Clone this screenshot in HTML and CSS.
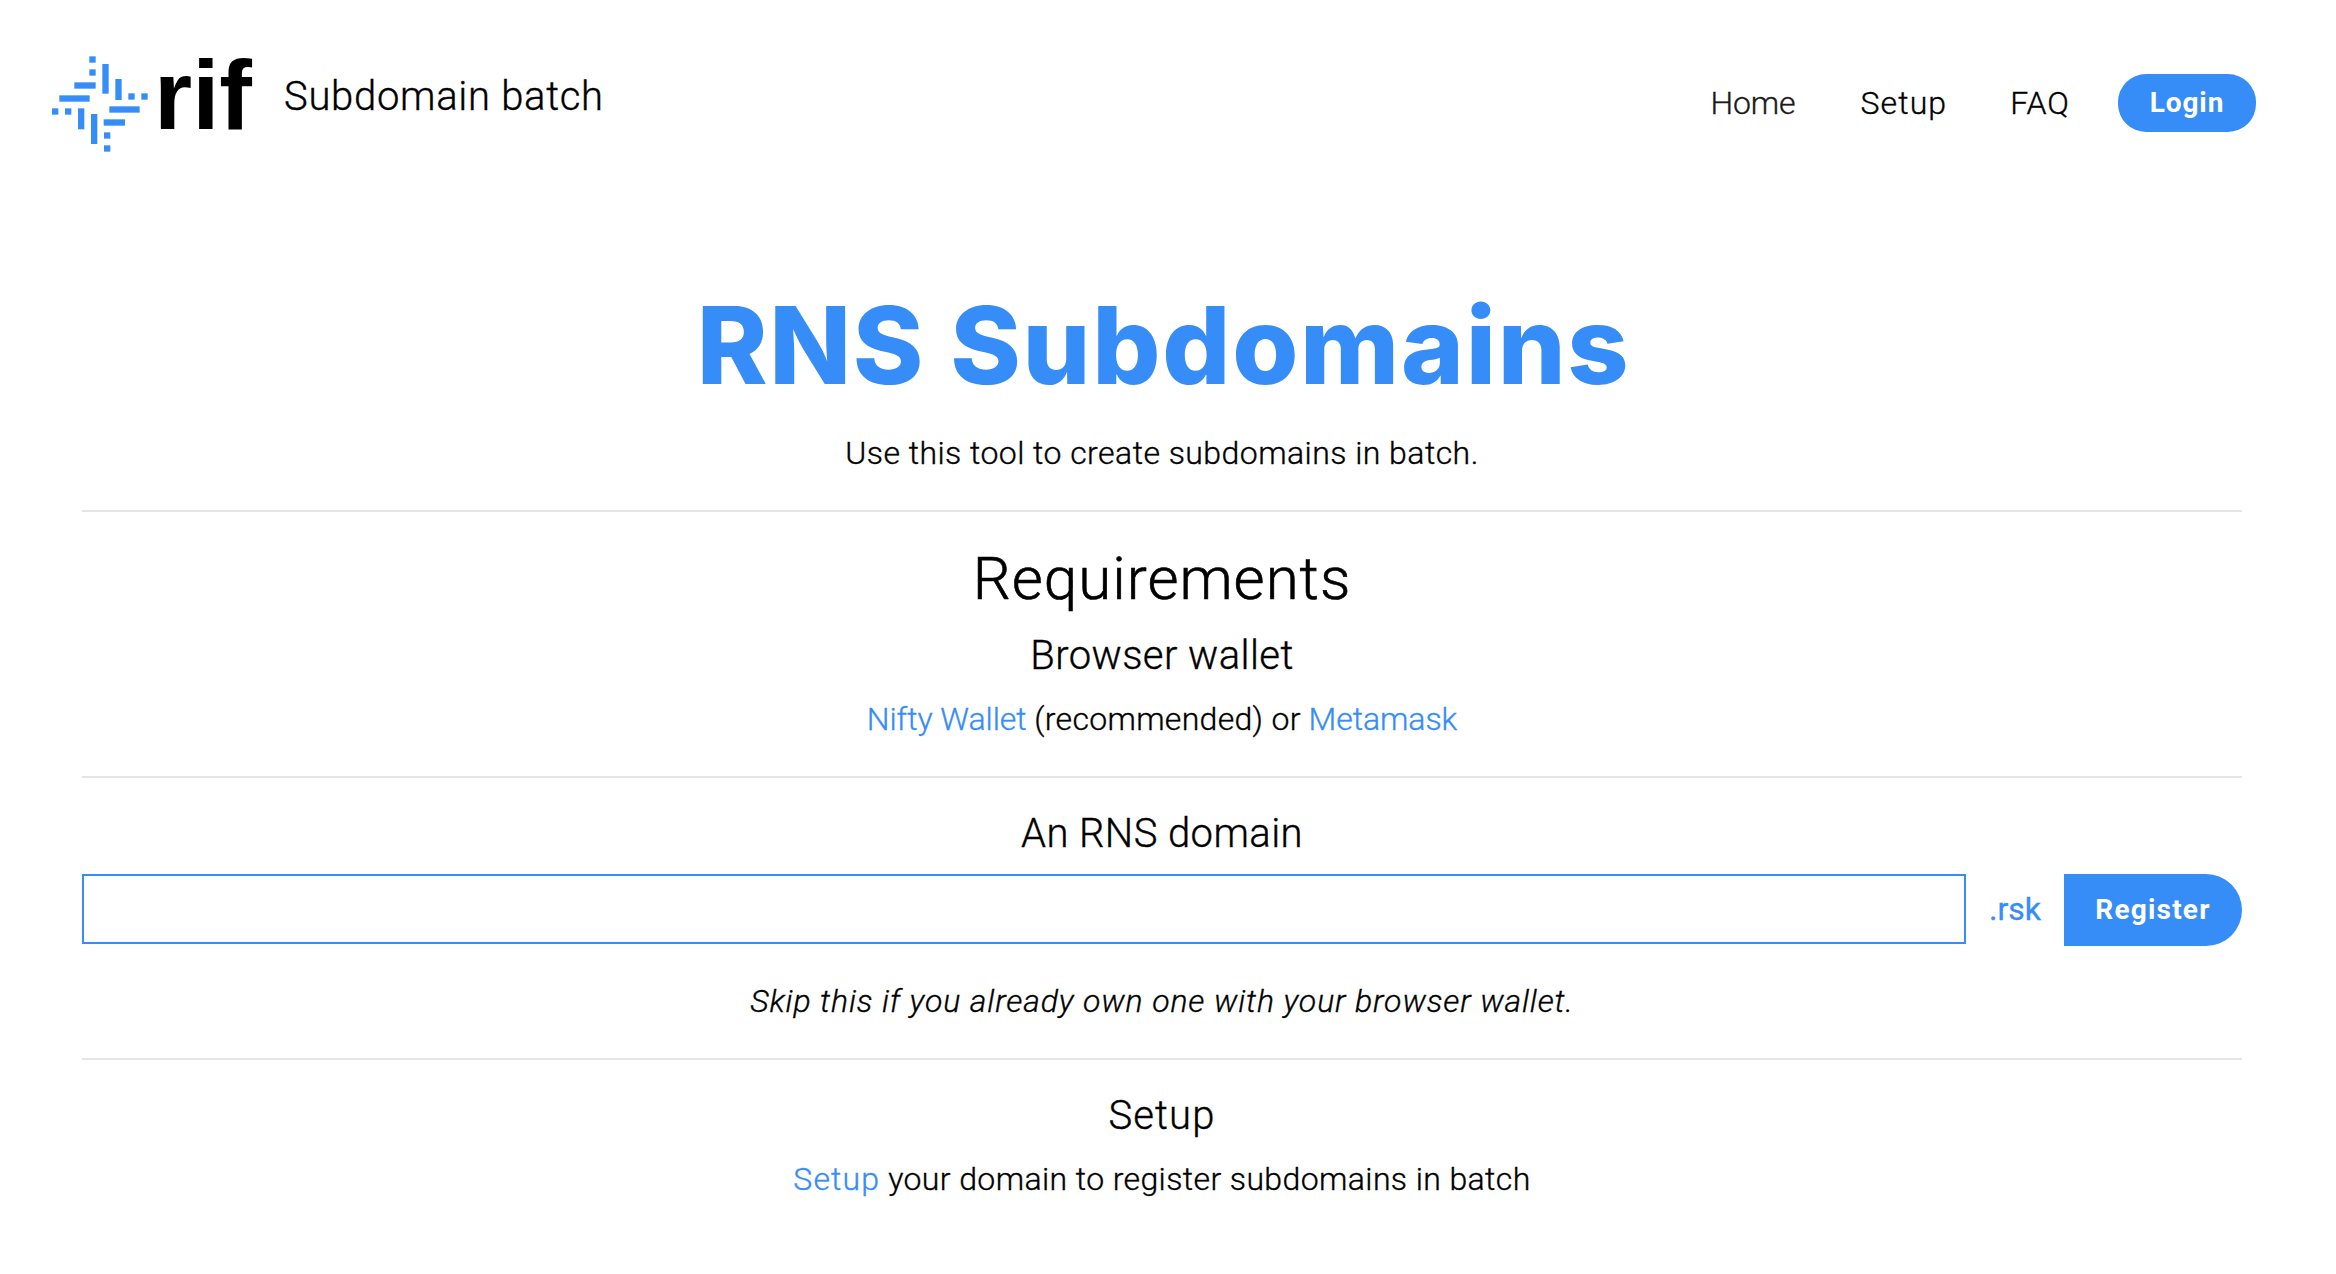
FILE: index.html
```
<!DOCTYPE html>
<html lang="en">
<head>
<meta charset="utf-8">
<title>RNS Subdomains</title>
<link rel="stylesheet" href="styles.css">
</head>
<body>
<header class="header">
  <a class="brand" href="#">
    <svg class="logo" width="204" height="96" viewBox="0 0 204 96" role="img" aria-label="rif">
      <g fill="#368df7" transform="scale(.33333) translate(-36 -48)">
        <rect x="148" y="49" width="19" height="19"/>
        <rect x="148" y="88" width="19" height="19"/>
        <rect x="265" y="160" width="19" height="19"/>
        <rect x="304" y="160" width="19" height="19"/>
        <rect x="36" y="205" width="19" height="19"/>
        <rect x="75" y="205" width="19" height="19"/>
        <rect x="192" y="277" width="19" height="19"/>
        <rect x="192" y="316" width="19" height="19"/>
        <rect x="187" y="72" width="19" height="89"/>
        <rect x="226" y="117" width="19" height="63"/>
        <rect x="103" y="127" width="64" height="19"/>
        <rect x="58" y="166" width="91" height="19"/>
        <rect x="114" y="205" width="19" height="63"/>
        <rect x="153" y="222" width="19" height="90"/>
        <rect x="208" y="199" width="91" height="19"/>
        <rect x="191" y="238" width="64" height="19"/>
      </g>
      <text class="wordmark" x="102" y="73">rif</text>
    </svg>
    <span class="brand-name">Subdomain batch</span>
  </a>
  <nav class="nav">
    <a class="nav-link nav-home" href="#">Home</a>
    <a class="nav-link nav-setup" href="#">Setup</a>
    <a class="nav-link nav-faq" href="#">FAQ</a>
    <button class="login">Login</button>
  </nav>
</header>
<main class="content">
  <h1 class="title">RNS Subdomains</h1>
  <p class="text intro">Use this tool to create subdomains in batch.</p>
  <hr class="rule">
  <section>
    <h2 class="heading">Requirements</h2>
    <h3 class="subheading wallet-heading">Browser wallet</h3>
    <p class="text wallets"><a class="link" href="#">Nifty Wallet</a> <span class="wallets-note">(recommended) or</span> <a class="link" href="#">Metamask</a></p>
  </section>
  <hr class="rule">
  <section>
    <h3 class="subheading">An RNS domain</h3>
    <form class="domain-form">
      <input class="domain-input" type="text" aria-label="Domain">
      <span class="suffix">.rsk</span>
      <button class="register" type="button">Register</button>
    </form>
    <p class="text note">Skip this if you already own one with your browser wallet.</p>
  </section>
  <hr class="rule">
  <section>
    <h3 class="subheading setup-heading">Setup</h3>
    <p class="text setup-text"><a class="link setup-link" href="#">Setup</a> your domain to register subdomains in batch</p>
  </section>
</main>
</body>
</html>
```
FILE: styles.css
```
* { box-sizing: border-box; }

body {
  margin: 0;
  background: #fff;
  color: #000;
  font: 300 32px/48px Roboto, "Open Sans", sans-serif;
  -webkit-text-stroke: .35px;
}

h1, h2, h3, p { margin: 0; }
a { color: inherit; text-decoration: none; }

.header {
  display: flex;
  justify-content: space-between;
  height: 281px;
  padding: 56px 80px 0 52px;
}

.brand {
  display: flex;
  align-items: flex-start;
}

.logo { overflow: visible; -webkit-text-stroke: 0; }
.wordmark { font: bold 98px "Liberation Sans", Arial, sans-serif; }

.brand-name {
  margin: 17px 0 0 28px;
  font-size: 40px;
  letter-spacing: .7px;
}

.nav {
  display: flex;
  height: 58px;
  margin-top: 18px;
  align-items: center;
}

.nav-home { margin-right: 65px; color: #1a1a1a; letter-spacing: -.1px; }
.nav-setup { margin-right: 63px; letter-spacing: 1.1px; }
.nav-faq { margin-right: 48px; letter-spacing: 1px; }

.login, .register {
  border: 0;
  padding: 0;
  background: #368df7;
  color: #fff;
  font: 700 28px/40px Roboto, sans-serif;
  -webkit-text-stroke: 0;
}

.login {
  width: 138px;
  height: 58px;
  border-radius: 28px;
  letter-spacing: .9px;
}

.content {
  padding: 0 94px 0 82px;
  text-align: center;
}

.title {
  padding-left: 3px;
  color: #368df7;
  font: 800 107px/128px Inter, sans-serif;
  letter-spacing: 1.7px;
  -webkit-text-stroke: 0;
}

.intro { margin-top: 20px; letter-spacing: .45px; }

.rule {
  height: 2px;
  margin: 33px 0 32px;
  border: 0;
  background: #e5e5e5;
}

.heading {
  font-size: 60px;
  font-weight: 300;
  line-height: 70px;
  letter-spacing: 1px;
  -webkit-text-stroke: .6px;
}

.subheading {
  font-size: 40px;
  font-weight: 300;
  letter-spacing: .42px;
}

.wallet-heading { margin-top: 18px; }
.setup-heading { letter-spacing: 1.15px; }
.link { color: #368df7; }
.wallets { margin-top: 15px; letter-spacing: -.05px; }
.wallets-note { letter-spacing: .3px; }

.domain-form {
  display: flex;
  align-items: flex-start;
  margin-top: 16px;
}

.domain-input {
  flex: 1;
  min-width: 0;
  height: 70px;
  border: 2px solid #368df7;
  border-radius: 0;
  background: #fff;
  font: inherit;
}

.suffix {
  width: 98px;
  color: #368df7;
  font-weight: 400;
  line-height: 70px;
}

.register {
  width: 178px;
  height: 72px;
  border-radius: 0 36px 36px 0;
  letter-spacing: 1.2px;
}

.note { margin-top: 31px; font-style: italic; letter-spacing: .88px; }
.setup-text { margin-top: 15px; letter-spacing: .39px; }
.setup-link { letter-spacing: 1.1px; }
```
